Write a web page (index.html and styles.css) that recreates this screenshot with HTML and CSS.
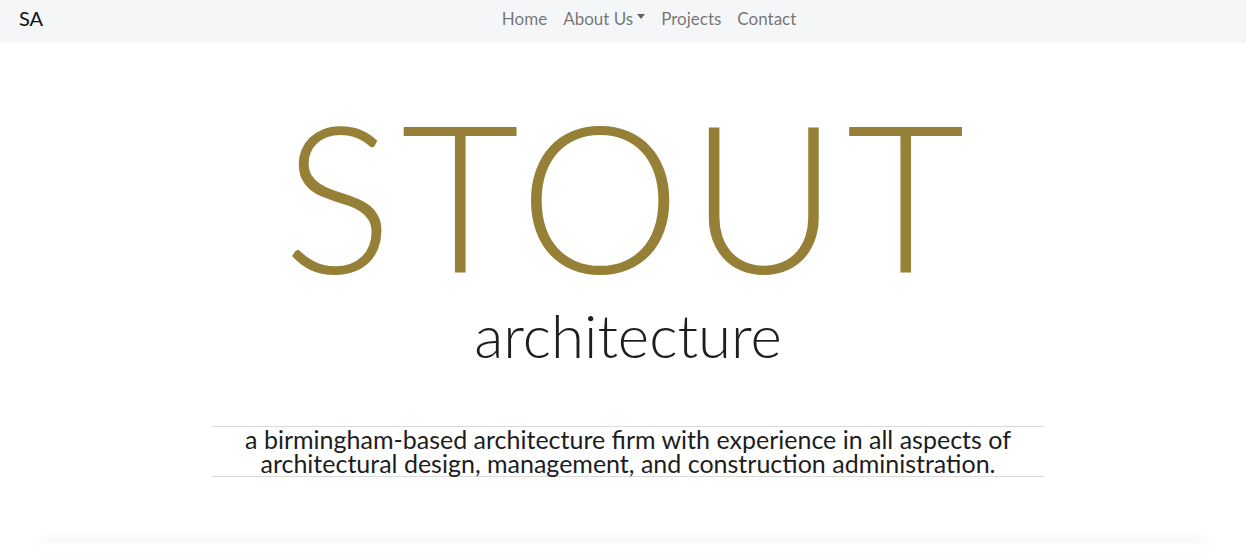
FILE: index.html
```html
<!DOCTYPE html>
<html lang="en">
<head>
<meta charset="utf-8">
<title>Stout Architecture</title>
<link rel="stylesheet" href="styles.css">
</head>
<body>
<nav class="navbar">
  <a class="brand" href="#">SA</a>
  <ul class="nav">
    <li><a href="#">Home</a></li>
    <li><a href="#" class="dropdown">About Us<span class="caret"></span></a></li>
    <li><a href="#">Projects</a></li>
    <li><a href="#">Contact</a></li>
  </ul>
</nav>
<main class="hero">
  <h1 class="title">STOUT</h1>
  <h2 class="subtitle">architecture</h2>
  <p class="tagline">a birmingham-based architecture firm with experience in all aspects of<br>architectural design, management, and construction administration.</p>
</main>
<div class="card"></div>
</body>
</html>
```
FILE: styles.css
```css
* { box-sizing: border-box; }
html, body { margin: 0; padding: 0; background: #fff; overflow: hidden; height: 558px; }
body { font-family: Lato, "Noto Sans", sans-serif; color: #212529; }
.navbar {
  display: flex;
  align-items: center;
  height: 43px;
  background: #f5f6f8;
  padding: 0 19px 7px;
}
.brand {
  font-size: 20px;
  color: #111;
  text-decoration: none;
  margin-right: 16px;
  font-weight: 400;
}
.nav {
  list-style: none;
  display: flex;
  margin: 0 auto;
  padding: 0 0 0 12px;
}
.nav a {
  display: flex;
  align-items: center;
  padding: 0 8px;
  font-size: 17px;
  color: rgba(0,0,0,0.55);
  text-decoration: none;
}
.caret {
  display: inline-block;
  margin-left: 4px;
  border-top: 5px solid rgba(0,0,0,0.6);
  border-left: 4.5px solid transparent;
  border-right: 4.5px solid transparent;
  transform: translateY(-2px);
}
.hero {
  display: flex;
  flex-direction: column;
  align-items: center;
  padding-left: 10px;
}
.title {
  margin: 45px 0 0;
  font-size: 205px;
  line-height: 212px;
  font-weight: 300;
  color: #968037;
  letter-spacing: 8px;
}
.subtitle {
  margin: 0;
  font-size: 60px;
  line-height: 70px;
  font-weight: 300;
  color: #1e1e22;
}
.tagline {
  margin: 56px 0 0;
  width: 832px;
  text-align: center;
  font-size: 25px;
  line-height: 24px;
  font-weight: 400;
  color: #1d1d1f;
  border-top: 1px solid #dadada;
  border-bottom: 1px solid #dadada;
  padding: 0 0 1px;
}
.card {
  margin: 66px 40px 0;
  height: 14px;
  box-shadow: 0 -6px 14px rgba(0,0,0,0.04);
  background: #fff;
}
```
